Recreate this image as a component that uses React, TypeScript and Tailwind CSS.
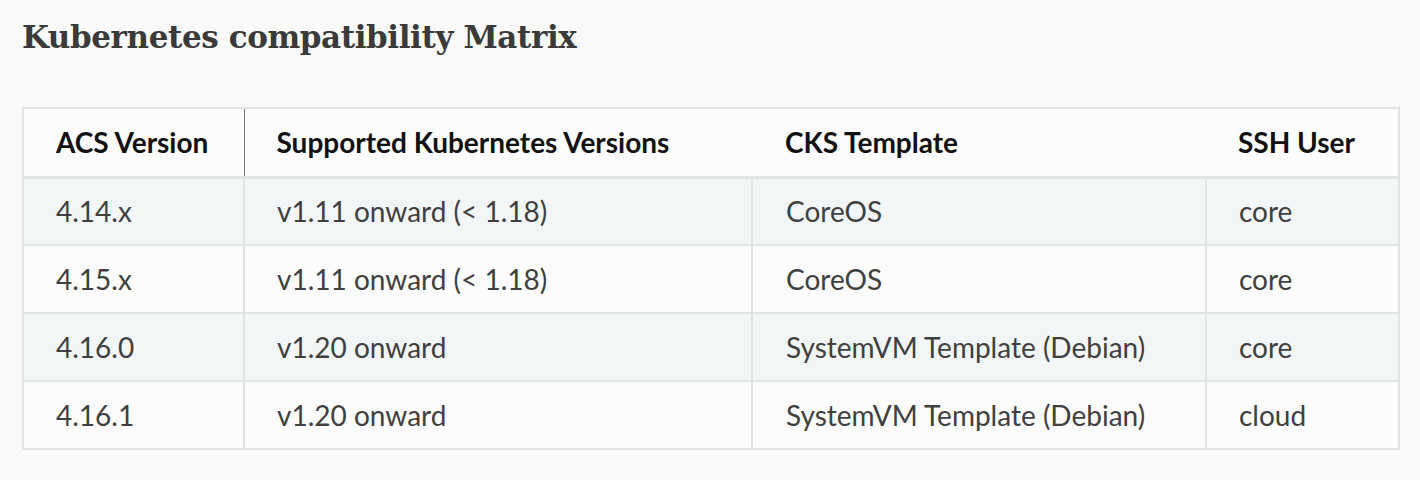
import React from 'react';

interface Row {
  acs: string;
  k8s: string;
  template: string;
  user: string;
}

const rows: Row[] = [
  { acs: '4.14.x', k8s: 'v1.11 onward (< 1.18)', template: 'CoreOS', user: 'core' },
  { acs: '4.15.x', k8s: 'v1.11 onward (< 1.18)', template: 'CoreOS', user: 'core' },
  { acs: '4.16.0', k8s: 'v1.20 onward', template: 'SystemVM Template (Debian)', user: 'core' },
  { acs: '4.16.1', k8s: 'v1.20 onward', template: 'SystemVM Template (Debian)', user: 'cloud' },
];

const App: React.FC = () => {
  return (
    <div className="min-h-[480px] bg-[#fafafa] px-[22px] pt-[14px] font-['Lato','Noto_Sans',sans-serif]">
      <h1 className="text-[31px] leading-[46px] font-bold text-[#3a3a3a] font-['DejaVu_Serif',serif] tracking-[-0.4px]">
        Kubernetes compatibility Matrix
      </h1>

      <table className="mt-[47px] w-[1376px] table-fixed border-collapse border-2 border-[#e1e4e5]">
        <colgroup>
          <col className="w-[221px]" />
          <col className="w-[508px]" />
          <col className="w-[454px]" />
          <col className="w-[193px]" />
        </colgroup>
        <thead className="bg-[#fcfcfc]">
          <tr className="h-[69px] border-b-[3px] border-[#e1e4e5]">
            <th className="pl-[32px] text-left text-[28px] font-bold text-[#111] border-r border-[#777]">ACS Version</th>
            <th className="pl-[32px] text-left text-[28px] font-bold text-[#111]">Supported Kubernetes Versions</th>
            <th className="pl-[33px] text-left text-[28px] font-bold text-[#111]">CKS Template</th>
            <th className="pl-[32px] text-left text-[28px] font-bold text-[#111]">SSH User</th>
          </tr>
        </thead>
        <tbody>
          {rows.map((r, i) => (
            <tr key={r.acs} className={`h-[68px] ${i % 2 === 0 ? 'bg-[#f3f6f6]' : 'bg-[#fcfcfc]'}`}>
              <td className="pl-[32px] text-[28px] text-[#404040] border-2 border-[#e1e4e5]">{r.acs}</td>
              <td className="pl-[32px] text-[28px] text-[#404040] border-2 border-[#e1e4e5]">{r.k8s}</td>
              <td className="pl-[33px] text-[28px] text-[#404040] border-2 border-[#e1e4e5]">{r.template}</td>
              <td className="pl-[32px] text-[28px] text-[#404040] border-2 border-[#e1e4e5]">{r.user}</td>
            </tr>
          ))}
        </tbody>
      </table>
    </div>
  );
};

export default App;
